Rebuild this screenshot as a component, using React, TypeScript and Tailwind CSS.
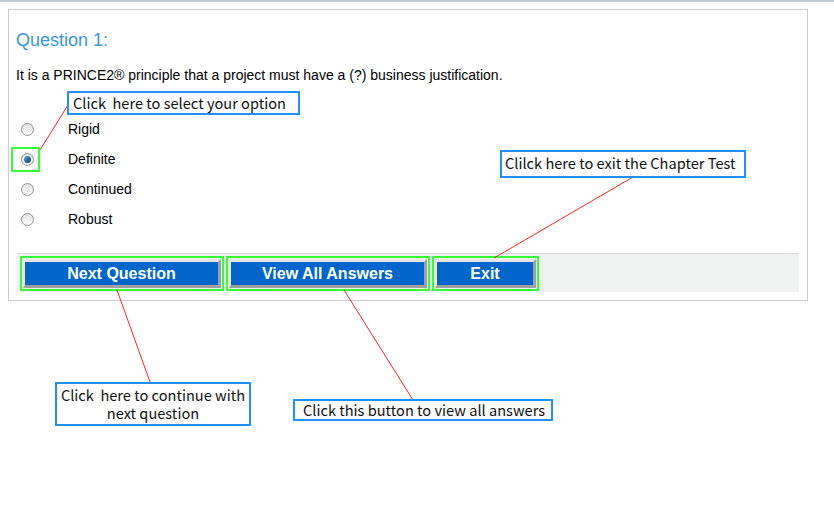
import React from "react";

const options = ["Rigid", "Definite", "Continued", "Robust"];

function Radio({ checked }: { checked: boolean }) {
  return (
    <span className="inline-flex items-center justify-center w-[13px] h-[13px] rounded-full border border-[#8e8f8f] bg-gradient-to-b from-[#e2e2e2] to-[#fdfdfd]">
      {checked && <span className="w-[7px] h-[7px] rounded-full bg-gradient-to-br from-[#5aa3e0] to-[#0b3f73]" />}
    </span>
  );
}

function QuizButton({ label, width }: { label: string; width: string }) {
  return (
    <div className="p-[1px] border-2 border-[#33ff33]">
      <button
        className={`${width} h-[29px] bg-[#0066cc] text-white font-bold text-[16px] border-t-[3px] border-l-[2px] border-t-[#e6e6e6] border-l-[#e6e6e6] border-r-[3px] border-b-[3px] border-r-[#a0a0a0] border-b-[#a0a0a0]`}
      >
        {label}
      </button>
    </div>
  );
}

function Callout({ className, children }: { className: string; children: React.ReactNode }) {
  return (
    <div
      className={`absolute bg-white border-2 border-[#1e90ff] text-[14.6px] leading-[18px] text-[#111] ${className}`}
      style={{ fontFamily: '"Noto Sans CJK JP", "DejaVu Sans", sans-serif' }}
    >
      {children}
    </div>
  );
}

export default function App() {
  return (
    <div className="relative w-[834px] h-[522px] bg-white" style={{ fontFamily: '"Liberation Sans", Arial, sans-serif' }}>
      <div className="h-[2px] bg-[#c4c8cc]" />
      <div className="ml-[8px] mt-[7px] w-[800px] h-[292px] border border-[#cccccc] px-[7px]">
        <div className="pt-[19px] text-[18px] leading-[22px] text-[#3399dd]">Question 1:</div>
        <div className="mt-[16px] text-[14px] leading-[16px] text-black">
          It is a PRINCE2® principle that a project must have a (?) business justification.
        </div>
        <div className="mt-[31px] flex flex-col">
          {options.map((o, i) => (
            <div key={o} className="h-[30px] flex items-center">
              <span className="w-[52px] pl-[5px] flex">
                <Radio checked={i === 1} />
              </span>
              <span className="text-[14px] text-black">{o}</span>
            </div>
          ))}
        </div>
        <div className="mt-[19px] mx-[1px] h-[39px] bg-[#f0f2f2] border-t border-[#d8d8d8] flex items-center pl-[3px] gap-[2px]">
          <QuizButton label="Next Question" width="w-[198px]" />
          <QuizButton label="View All Answers" width="w-[198px]" />
          <QuizButton label="Exit" width="w-[101px]" />
        </div>
      </div>

      {/* annotations */}
      <div className="absolute left-[11px] top-[147px] w-[29px] h-[25px] border-2 border-[#33ff33]" />
      <svg className="absolute inset-0 pointer-events-none" width="834" height="522">
        <line x1="68" y1="105" x2="40" y2="150" stroke="#ff2020" strokeWidth="1" />
        <line x1="633" y1="177" x2="494" y2="258" stroke="#ff2020" strokeWidth="1" />
        <line x1="117" y1="290" x2="150" y2="382" stroke="#ff2020" strokeWidth="1" />
        <line x1="344" y1="290" x2="413" y2="400" stroke="#ff2020" strokeWidth="1" />
      </svg>
      <Callout className="left-[67px] top-[91px] w-[233px] h-[24px] pl-[4px] pt-[1px]">Click&nbsp; here to select your option</Callout>
      <Callout className="left-[500px] top-[150px] w-[246px] h-[28px] pl-[3px] pt-[2px]">Clilck here to exit the Chapter Test</Callout>
      <Callout className="left-[55px] top-[382px] w-[196px] h-[44px] pt-[2px] text-center leading-[17px]">
        Click&nbsp; here to continue with
        <br />
        next question
      </Callout>
      <Callout className="left-[293px] top-[399px] w-[260px] h-[22px] pl-[8px]">Click this button to view all answers</Callout>
    </div>
  );
}
